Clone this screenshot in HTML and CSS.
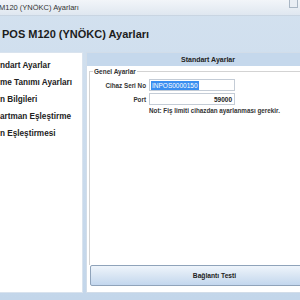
FILE: index.html
```html
<!DOCTYPE html>
<html lang="tr">
<head>
  <meta charset="UTF-8">
  <title>Ayarlar</title>
  <link rel="stylesheet" href="styles.css">
</head>
<body>
  <div class="window">
    <div class="titlebar">
      <span class="title-text">M120 (YNÖKC) Ayarları</span>
      <span class="tb-btn"></span>
    </div>

    <div class="header">POS M120 (YNÖKC) Ayarları</div>

    <div class="main">
      <ul class="menu">
        <li>ndart Ayarlar</li>
        <li>me Tanımı Ayarları</li>
        <li>n Bilgileri</li>
        <li>artman Eşleştirme</li>
        <li>n Eşleştirmesi</li>
      </ul>

      <div class="content">
        <div class="content-head">Standart Ayarlar</div>
        <div class="group">
          <div class="group-title">Genel Ayarlar</div>
          <div class="row">
            <span class="lbl">Cihaz Seri No</span>
            <span class="field"><span class="sel">INPOS0000150</span></span>
          </div>
          <div class="row">
            <span class="lbl">Port</span>
            <span class="field num">59000</span>
          </div>
          <div class="note">Not: Fiş limiti cihazdan ayarlanması gerekir.</div>
        </div>
        <button class="test-btn">Bağlantı Testi</button>
      </div>
    </div>
  </div>
</body>
</html>
```

FILE: styles.css
```css
* {
  box-sizing: border-box;
}

body {
  margin: 0;
  font-family: "Liberation Sans", "DejaVu Sans", sans-serif;
  background: #c8d9eb;
  overflow: hidden;
}

.window {
  width: 300px;
  height: 300px;
  display: flex;
  flex-direction: column;
  background: linear-gradient(to bottom, #d3e1ef, #c3d6ea);
  overflow: hidden;
}

.titlebar {
  height: 16px;
  flex: none;
  display: flex;
  align-items: center;
  justify-content: space-between;
  padding-right: 2px;
  background: linear-gradient(to bottom, #f2f5f9, #dfe7f0);
  border-bottom: 1px solid #c9d5e2;
  font-size: 7.5px;
  color: #333;
}

.title-text {
  margin-left: -1px;
}

.tb-btn {
  width: 9px;
  height: 8px;
  margin-top: -7px;
  border: 1px solid #a9b6c4;
  border-top: none;
  background: #e9eef4;
}

.header {
  height: 36px;
  flex: none;
  display: flex;
  align-items: center;
  padding-left: 2px;
  font-size: 11px;
  font-weight: bold;
  color: #1c1c1c;
}

.main {
  flex: 1;
  display: flex;
  gap: 3px;
  padding-bottom: 7px;
}

.menu {
  width: 83px;
  flex: none;
  margin: 0;
  padding: 4px 0 0 0;
  list-style: none;
  background: #fff;
  border: 1px solid #d9e3ee;
  border-left: none;
}

.menu li {
  height: 17px;
  line-height: 17px;
  font-size: 8.2px;
  font-weight: bold;
  color: #222;
  white-space: nowrap;
}

.content {
  width: 250px;
  flex: none;
  display: flex;
  flex-direction: column;
  background: #fff;
  border: 1px solid #d2dde9;
  padding: 0 0 6px 2px;
}

.content-head {
  height: 13px;
  margin-left: -2px;
  line-height: 13px;
  text-align: center;
  font-size: 7px;
  font-weight: bold;
  color: #222;
  background: #c5d8ec;
  padding-right: 6px;
}

.group {
  flex: 1;
  margin-top: 5px;
  padding-top: 7px;
  border-top: 1px solid #d3d3d3;
  border-left: 1px solid #d3d3d3;
  position: relative;
}

.group-title {
  position: absolute;
  top: -4px;
  left: 3px;
  padding: 0 1px;
  background: #fff;
  font-size: 6.5px;
  font-weight: bold;
  color: #333;
  line-height: 8px;
}

.row {
  display: flex;
  align-items: center;
  margin-bottom: 2px;
}

.lbl {
  width: 59px;
  text-align: right;
  padding-right: 3px;
  font-size: 6.3px;
  font-weight: bold;
  color: #333;
}

.field {
  width: 86px;
  height: 12px;
  border: 1px solid #c4ccd6;
  display: flex;
  align-items: center;
  padding: 0 1px;
  font-size: 6.5px;
  font-weight: bold;
  color: #222;
}

.field.num {
  justify-content: flex-end;
  padding-right: 2px;
}

.sel {
  background: #3a8ef0;
  color: #fff;
  font-weight: normal;
  line-height: 9px;
  padding: 0 1px;
}

.note {
  margin: 2px 0 0 59px;
  font-size: 6.3px;
  font-weight: bold;
  color: #333;
  white-space: nowrap;
}

.test-btn {
  height: 21px;
  margin: 0 0 0 1px;
  font-family: inherit;
  font-size: 6.7px;
  font-weight: bold;
  color: #222;
  border: 1px solid #8fa3ba;
  border-radius: 2px;
  background: linear-gradient(to bottom, #eef4fb, #dbe7f4 45%, #c3d7ee);
  padding: 0 0 0 4px;
}
```
